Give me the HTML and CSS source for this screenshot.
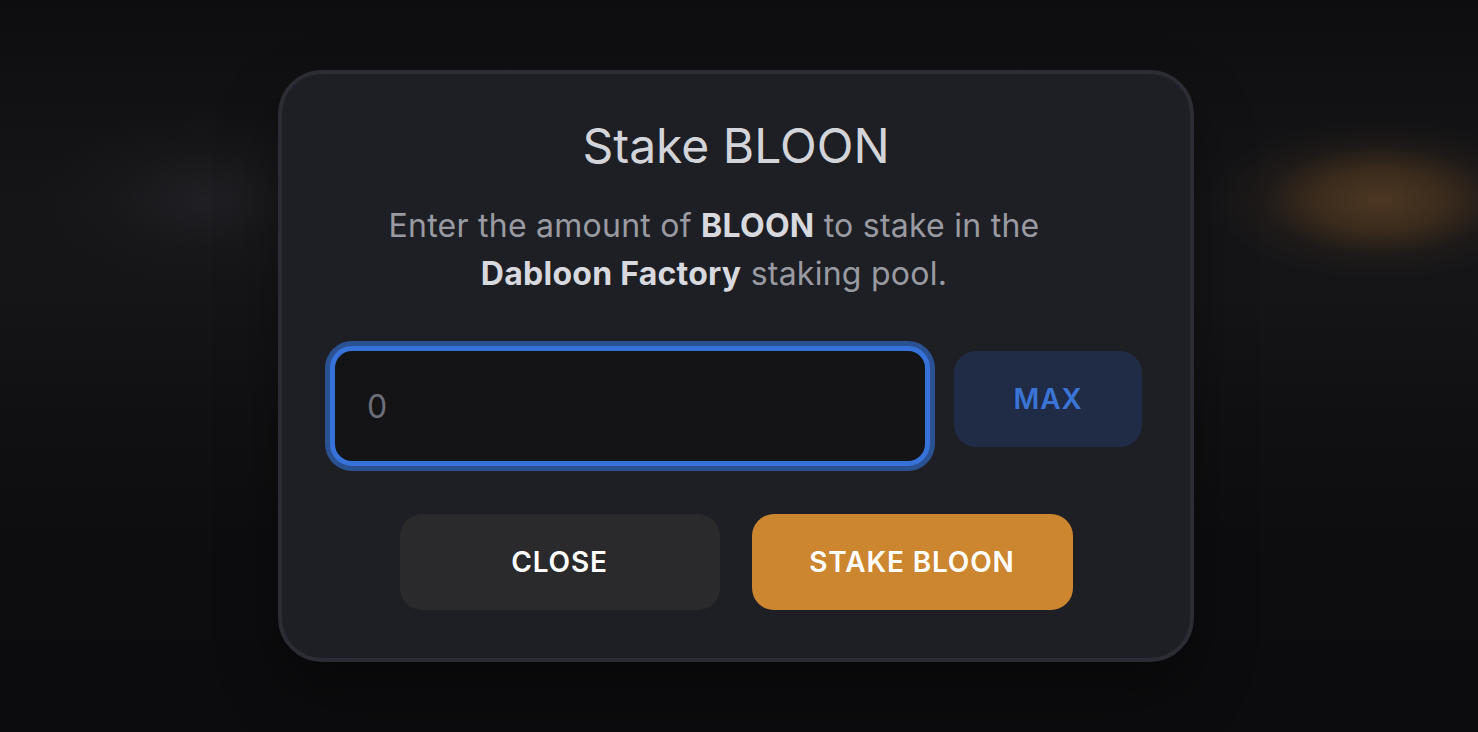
FILE: index.html
```html
<!DOCTYPE html>
<html lang="en">
<head>
<meta charset="utf-8">
<title>Stake BLOON</title>
<link rel="stylesheet" href="styles.css">
</head>
<body>
<div class="overlay">
  <div class="modal">
    <h1 class="title">Stake BLOON</h1>
    <p class="desc">Enter the amount of <strong>BLOON</strong> to stake in the <strong>Dabloon Factory</strong> staking pool.</p>
    <div class="input-row">
      <input class="amount" type="text" placeholder="0">
      <button class="btn-max" type="button">MAX</button>
    </div>
    <div class="actions">
      <button class="btn btn-close" type="button">CLOSE</button>
      <button class="btn btn-stake" type="button">STAKE BLOON</button>
    </div>
  </div>
</div>
</body>
</html>
```

FILE: styles.css
```css
* { box-sizing: border-box; }
html, body { margin: 0; padding: 0; height: 100%; }
body {
  font-family: Inter, "Noto Sans", sans-serif;
  background:
    radial-gradient(ellipse 170px 80px at 1380px 200px, rgba(76,55,34,1) 0%, rgba(70,50,30,0.8) 35%, rgba(45,34,24,0.35) 70%, rgba(20,20,22,0) 100%),
    radial-gradient(ellipse 170px 90px at 205px 200px, rgba(33,33,37,0.9) 0%, rgba(26,26,30,0.5) 55%, rgba(20,20,23,0) 100%),
    linear-gradient(180deg, #0d0d0f 0%, #111113 12%, #151518 28%, #151518 40%, #101012 58%, #0d0d0f 75%, #0c0c0e 100%);
  overflow: hidden;
}
.overlay {
  height: 100vh;
  display: flex;
  align-items: center;
  justify-content: center;
  padding-right: 6px;
}
.modal {
  width: 916px;
  background: #1e1f24;
  border: 4px solid #2c2d34;
  border-radius: 44px;
  padding: 48px;
  box-shadow: 0 30px 60px rgba(0,0,0,0.35);
  display: flex;
  flex-direction: column;
  align-items: stretch;
}
.title {
  margin: 0;
  font-size: 48px;
  line-height: 48px;
  font-weight: 400;
  color: #d3d4d9;
  text-align: center;
}
.desc {
  margin: 32px 0 48px;
  max-width: 768px;
  font-size: 32px;
  line-height: 48px;
  letter-spacing: 0.25px;
  color: #9a9ba2;
  text-align: center;
}
.desc strong {
  color: #d8d9de;
  font-weight: 700;
}
.input-row {
  display: flex;
  align-items: flex-start;
  gap: 24px;
}
.amount {
  flex: 1;
  min-width: 0;
  height: 120px;
  background: #141417;
  border: 5px solid #3672d9;
  border-radius: 22px;
  box-shadow: 0 0 0 5px #2a5192;
  padding: 0 32px;
  font-family: Inter, "Noto Sans", sans-serif;
  font-size: 32px;
  color: #d3d4d9;
  outline: none;
}
.amount::placeholder { color: #6c6f77; }
.btn-max {
  width: 188px;
  height: 96px;
  margin-top: 5px;
  border: none;
  border-radius: 22px;
  background: #202c46;
  color: #3a74d6;
  font-family: Inter, "Noto Sans", sans-serif;
  font-size: 28px;
  font-weight: 600;
  letter-spacing: 0.03em;
}
.actions {
  margin-top: 48px;
  display: flex;
  justify-content: center;
  gap: 32px;
}
.btn {
  width: 320px;
  height: 96px;
  border: none;
  border-radius: 22px;
  color: #ffffff;
  font-family: Inter, "Noto Sans", sans-serif;
  font-size: 28px;
  font-weight: 600;
  letter-spacing: 0.03em;
}
.btn-close { background: #2a2a2d; }
.btn-stake { background: #cd8630; width: 321px; }
```
